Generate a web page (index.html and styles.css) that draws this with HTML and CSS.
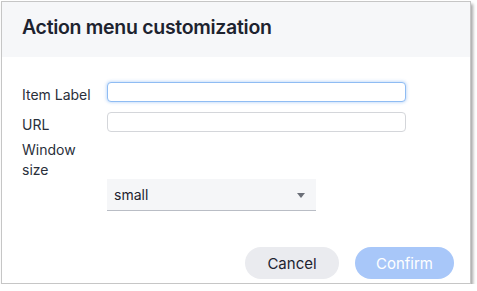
FILE: index.html
```html
<!DOCTYPE html>
<html lang="en">
<head>
    <meta charset="UTF-8">
    <title>Action menu customization</title>
    <link rel="stylesheet" href="styles.css">
</head>
<body>
    <!-- Dialog -->
    <div class="dialog">
        <div class="dialog-header">
            <h1 class="dialog-title">Action menu customization</h1>
        </div>

        <form class="dialog-body">
            <div class="field-row">
                <label class="field-label" for="item-label">Item Label</label>
                <input type="text" id="item-label" class="text-input is-focused">
            </div>
            <div class="field-row">
                <label class="field-label" for="url">URL</label>
                <input type="text" id="url" class="text-input">
            </div>
            <div class="field-row window-row">
                <label class="field-label label-wrap">Window size</label>
            </div>
            <div class="select-row">
                <div class="select-box">
                    <span>small</span>
                    <span class="select-arrow"></span>
                </div>
            </div>
        </form>

        <div class="dialog-footer">
            <button type="button" class="btn btn-secondary">Cancel</button>
            <button type="button" class="btn btn-primary">Confirm</button>
        </div>
    </div>
</body>
</html>
```

FILE: styles.css
```css
/* General */
body {
    margin: 0;
    padding: 1px 0 0 1px;
    background-color: #ffffff;
    font-family: 'Inter', 'Liberation Sans', sans-serif;
    color: #1d232f;
}

.dialog {
    width: 468px;
    height: 281px;
    border: 1px solid #c6c6c6;
    background-color: #ffffff;
    box-shadow: 2px 3px 3px rgba(0, 0, 0, 0.35);
    display: flex;
    flex-direction: column;
}

/* Header */
.dialog-header {
    height: 55px;
    box-sizing: border-box;
    background-color: #f6f7f9;
    padding: 0 0 5px 20px;
    display: flex;
    align-items: center;
}

.dialog-title {
    margin: 0;
    font-size: 19.5px;
    font-weight: 600;
    letter-spacing: -0.3px;
}

/* Form */
.dialog-body {
    padding: 25px 0 0 20px;
    display: flex;
    flex-direction: column;
    gap: 10px;
}

.field-row {
    display: flex;
    align-items: center;
    height: 20px;
}

.field-label {
    width: 85px;
    font-size: 14px;
    color: #2a2f3a;
    padding-top: 4px;
}

.window-row {
    height: 40px;
    margin-top: -2px;
}

.label-wrap {
    width: 60px;
    line-height: 20px;
    padding-top: 0;
}

.text-input {
    width: 299px;
    height: 20px;
    box-sizing: border-box;
    border: 1px solid #d4d6da;
    border-radius: 4px;
    margin: 0;
    padding: 0 6px;
    outline: none;
}

.is-focused {
    border-color: #8fbcf3;
    box-shadow: 0 0 3px 1px rgba(80, 150, 240, 0.3);
}

.select-row {
    padding-left: 85px;
    margin-top: -11px;
}

.select-box {
    width: 209px;
    height: 32px;
    box-sizing: border-box;
    background-color: #f5f6f8;
    border-bottom: 1px solid #b9bdc5;
    padding: 0 11px 0 7px;
    display: flex;
    align-items: center;
    justify-content: space-between;
    font-size: 14px;
    color: #1d232f;
}

.select-arrow {
    width: 0;
    height: 0;
    border-left: 4px solid transparent;
    border-right: 4px solid transparent;
    border-top: 5px solid #6b6f78;
    margin-top: 2px;
}

/* Footer */
.dialog-footer {
    margin-top: auto;
    padding: 0 16px 4px 0;
    display: flex;
    justify-content: flex-end;
    gap: 16px;
}

.btn {
    height: 32px;
    border: none;
    border-radius: 16px;
    font-family: inherit;
    font-size: 15px;
    padding: 0;
}

.btn-secondary {
    width: 94px;
    background-color: #eaebef;
    color: #1d232f;
}

.btn-primary {
    width: 99px;
    background-color: #a8c7f9;
    color: #ffffff;
}
```
